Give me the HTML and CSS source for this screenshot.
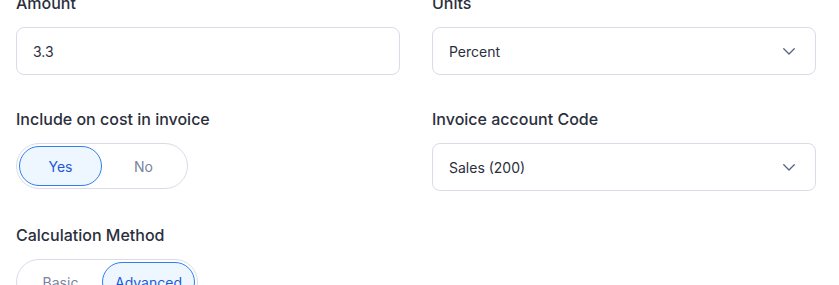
FILE: index.html
```html
<!DOCTYPE html>
<html lang="en">
<head>
<meta charset="utf-8">
<link rel="stylesheet" href="styles.css">
</head>
<body>
<form class="form">
  <div class="field">
    <label class="label">Amount</label>
    <div class="input">3.3</div>
  </div>
  <div class="field">
    <label class="label">Units</label>
    <div class="input select">
      <span>Percent</span>
      <svg class="chev" width="12" height="7" viewBox="0 0 12 7"><path d="M0.75 0.75l5.25 5.25 5.25-5.25" fill="none" stroke="#56618a" stroke-width="1.3" stroke-linecap="round" stroke-linejoin="round"/></svg>
    </div>
  </div>
  <div class="field">
    <label class="label">Include on cost in invoice</label>
    <div class="toggle">
      <button type="button" class="opt active">Yes</button>
      <button type="button" class="opt">No</button>
    </div>
  </div>
  <div class="field">
    <label class="label">Invoice account Code</label>
    <div class="input select">
      <span>Sales (200)</span>
      <svg class="chev" width="12" height="7" viewBox="0 0 12 7"><path d="M0.75 0.75l5.25 5.25 5.25-5.25" fill="none" stroke="#56618a" stroke-width="1.3" stroke-linecap="round" stroke-linejoin="round"/></svg>
    </div>
  </div>
  <div class="field">
    <label class="label">Calculation Method</label>
    <div class="toggle">
      <button type="button" class="opt">Basic</button>
      <button type="button" class="opt active">Advanced</button>
    </div>
  </div>
</form>
</body>
</html>
```
FILE: styles.css
```css
html, body {
  margin: 0;
  padding: 0;
  background: #ffffff;
  font-family: Inter, "Noto Sans", sans-serif;
  overflow: hidden;
}
.form {
  display: grid;
  grid-template-columns: 384px 384px;
  column-gap: 32px;
  row-gap: 32px;
  padding-left: 16px;
  margin-top: -9px;
}
.field {
  display: flex;
  flex-direction: column;
  align-items: flex-start;
}
.label {
  font-size: 16px;
  line-height: 24px;
  font-weight: 500;
  color: #2b2f3d;
  margin-bottom: 12px;
}
.input {
  box-sizing: border-box;
  width: 100%;
  height: 48px;
  border: 1px solid #d9dce7;
  border-radius: 8px;
  padding: 0 16px;
  display: flex;
  align-items: center;
  font-size: 14px;
  color: #2b2f3d;
}
.select {
  justify-content: space-between;
  padding-right: 20px;
}
.chev {
  display: block;
}
.toggle {
  display: flex;
  border: 1px solid #d9dce7;
  border-radius: 9999px;
  padding: 2px;
}
.opt {
  box-sizing: border-box;
  min-width: 83px;
  height: 40px;
  padding: 0 12px;
  border: 1px solid transparent;
  border-radius: 9999px;
  background: transparent;
  font-family: Inter, "Noto Sans", sans-serif;
  font-size: 14px;
  color: #7a829e;
  cursor: pointer;
}
.opt.active {
  border-color: #2f80ed;
  background: #eef6ff;
  color: #1d5bd6;
}
```
